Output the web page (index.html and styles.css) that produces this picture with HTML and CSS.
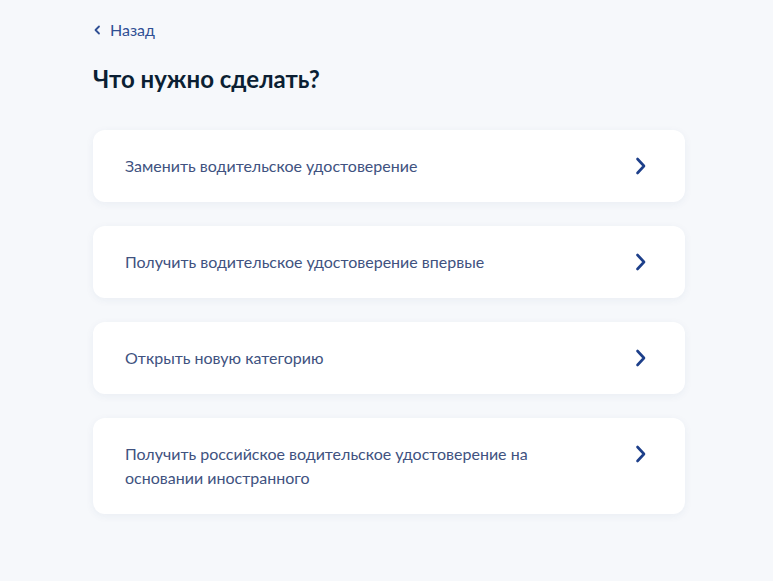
FILE: index.html
```html
<!DOCTYPE html>
<html lang="ru">
<head>
<meta charset="utf-8">
<title>Что нужно сделать?</title>
<link rel="stylesheet" href="styles.css">
</head>
<body>
<main class="page">
  <a class="back" href="#">
    <svg class="back-icon" width="8" height="10" viewBox="0 0 8 10"><path d="M6 1.5 L2.5 5 L6 8.5" fill="none" stroke="#2f4f94" stroke-width="1.8" stroke-linecap="round" stroke-linejoin="round"/></svg>
    <span>Назад</span>
  </a>
  <h1 class="title">Что нужно сделать?</h1>
  <ul class="options">
    <li class="option">
      <span class="option-text">Заменить водительское удостоверение</span>
      <span class="chev"><svg width="12" height="18" viewBox="0 0 12 18"><path d="M2.5 2 L9 9 L2.5 16" fill="none" stroke="#1d3f8a" stroke-width="2.6" stroke-linecap="round" stroke-linejoin="round"/></svg></span>
    </li>
    <li class="option">
      <span class="option-text">Получить водительское удостоверение впервые</span>
      <span class="chev"><svg width="12" height="18" viewBox="0 0 12 18"><path d="M2.5 2 L9 9 L2.5 16" fill="none" stroke="#1d3f8a" stroke-width="2.6" stroke-linecap="round" stroke-linejoin="round"/></svg></span>
    </li>
    <li class="option">
      <span class="option-text">Открыть новую категорию</span>
      <span class="chev"><svg width="12" height="18" viewBox="0 0 12 18"><path d="M2.5 2 L9 9 L2.5 16" fill="none" stroke="#1d3f8a" stroke-width="2.6" stroke-linecap="round" stroke-linejoin="round"/></svg></span>
    </li>
    <li class="option">
      <span class="option-text">Получить российское водительское удостоверение на основании иностранного</span>
      <span class="chev"><svg width="12" height="18" viewBox="0 0 12 18"><path d="M2.5 2 L9 9 L2.5 16" fill="none" stroke="#1d3f8a" stroke-width="2.6" stroke-linecap="round" stroke-linejoin="round"/></svg></span>
    </li>
  </ul>
</main>
</body>
</html>
```

FILE: styles.css
```css
* { box-sizing: border-box; }
html, body { margin: 0; padding: 0; }
body {
  background: #f6f8fb;
  font-family: Lato, "Noto Sans", sans-serif;
  color: #0b1f33;
  min-height: 581px;
}
.page {
  width: 592px;
  margin-left: 93px;
  padding-top: 18px;
}
.back {
  display: flex;
  align-items: center;
  gap: 9px;
  color: #2f4f94;
  text-decoration: none;
  font-size: 16px;
  line-height: 24px;
  height: 24px;
}
.back-icon { display: block; }
.title {
  margin: 21px 0 0;
  font-size: 24px;
  line-height: 32px;
  font-weight: 700;
  color: #0b1f33;
}
.options {
  list-style: none;
  margin: 35px 0 0;
  padding: 0;
  display: flex;
  flex-direction: column;
  gap: 24px;
}
.option {
  background: #fff;
  border-radius: 12px;
  box-shadow: 0 2px 8px rgba(30, 60, 120, 0.06);
  padding: 24px 38px 24px 32px;
  display: flex;
  align-items: flex-start;
  justify-content: space-between;
  gap: 40px;
}
.option-text {
  font-size: 16px;
  line-height: 24px;
  color: #40527f;
  max-width: 420px;
}
.chev {
  display: flex;
  align-items: center;
  height: 24px;
  flex: none;
}
.chev svg { display: block; }
```
